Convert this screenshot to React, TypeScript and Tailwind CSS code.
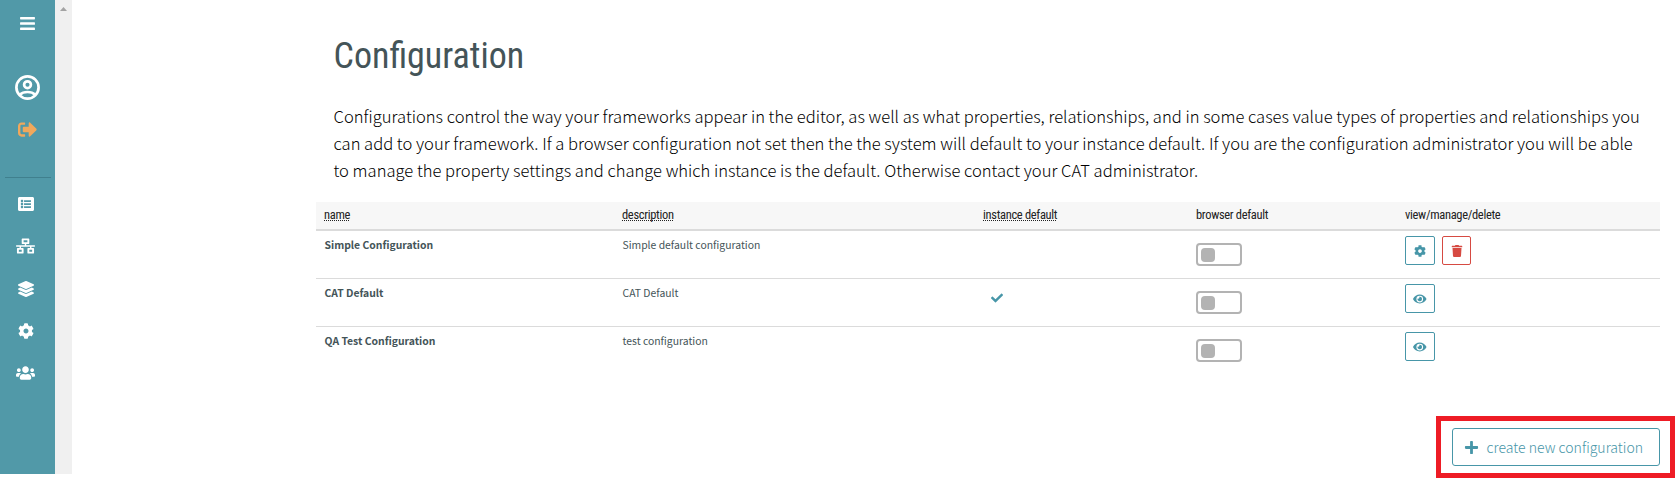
import React from "react";
import {
  FaBars,
  FaSignOutAlt,
  FaListAlt,
  FaNetworkWired,
  FaLayerGroup,
  FaCog,
  FaUsers,
  FaCheck,
  FaEye,
  FaTrash,
  FaPlus,
} from "react-icons/fa";

type Config = { name: string; description: string; isDefault?: boolean; editable?: boolean };

const configs: Config[] = [
  { name: "Simple Configuration", description: "Simple default configuration", editable: true },
  { name: "CAT Default", description: "CAT Default", isDefault: true },
  { name: "QA Test Configuration", description: "test configuration" },
];

const columns = [
  { label: "name", sortable: true },
  { label: "description", sortable: true },
  { label: "instance default", sortable: true },
  { label: "browser default" },
  { label: "view/manage/delete" },
];

function AccountIcon({ className }: { className?: string }) {
  return (
    <svg className={className} viewBox="0 0 25 25" fill="none" stroke="currentColor" strokeWidth="2.7">
      <circle cx="12.5" cy="12.5" r="11.1" />
      <circle cx="12.5" cy="9.7" r="3.4" />
      <path d="M4.8 19.8c2-2 4.800-2.800 7.700-2.800s5.700.8 7.700 2.800" />
    </svg>
  );
}

function Sidebar() {
  return (
    <nav className="flex h-[474px] w-[55px] shrink-0 flex-col bg-[#5199a8] text-white">
      <div className="mr-[4px] ml-[5px] flex h-[178px] flex-col items-center border-b border-[#40808e] pr-[1px]">
        <FaBars className="mt-[15px] size-[17px]" />
        <AccountIcon className="mt-[43px] size-[25px]" />
        <FaSignOutAlt className="mt-[19.5px] size-[19px] text-[#f0a85c]" />
      </div>
      <div className="mr-[4px] flex flex-col items-center">
        <div className="mt-[5px] flex h-[42.3px] items-center"><FaListAlt className="size-4" /></div>
        <div className="flex h-[42.3px] items-center"><FaNetworkWired className="h-[16px] w-[19px]" /></div>
        <div className="flex h-[42.3px] items-center"><FaLayerGroup className="size-4" /></div>
        <div className="flex h-[42.3px] items-center"><FaCog className="size-4" /></div>
        <div className="flex h-[42.3px] items-center"><FaUsers className="h-[16px] w-[19px]" /></div>
      </div>
    </nav>
  );
}

function Toggle() {
  return (
    <button className="mt-3 flex h-[23px] w-[46px] items-center rounded-[4px] border-2 border-[#b3b3b3] pl-[3px]">
      <span className="size-[14px] rounded-[4px] bg-[#b3b3b3]" />
    </button>
  );
}

export default function App() {
  return (
    <div className="flex h-[484px] bg-white font-['Noto_Sans_CJK_SC',sans-serif]">
      <Sidebar />
      <div className="flex h-[474px] w-[17px] shrink-0 justify-center bg-[#f0f0f0] pt-[7px]">
        <svg className="h-1 w-[7px]" viewBox="0 0 7 4" fill="#a3a3a3">
          <path d="M3.5 0 7 4H0z" />
        </svg>
      </div>
      <main className="ml-[244px] flex w-[1361px] shrink-0 flex-col">
        <h1 className="mt-[35px] ml-[17.5px] h-[42px] font-['Roboto_Condensed',Roboto,sans-serif] text-[36px] leading-[42px] text-[#445458] [font-stretch:75%]">
          Configuration
        </h1>
        <p className="mt-[26px] ml-[17.5px] w-[1314px] text-[16.57px] leading-[27px] font-light text-black">
          Configurations control the way your frameworks appear in the editor, as well as what properties, relationships, and in some cases value types of properties and relationships you
          can add to your framework. If a browser configuration not set then the the system will default to your instance default. If you are the configuration administrator you will be able
          to manage the property settings and change which instance is the default. Otherwise contact your CAT administrator.
        </p>
        <div className="mt-[18px] w-[1344px]">
          <div className="grid h-[29px] grid-cols-[298px_361px_213px_209px_263px] border-b-2 border-[#dbdbdb] bg-[#f7f7f7] font-['Roboto_Condensed',Roboto,sans-serif] text-[12.5px] leading-[26px] tracking-[-0.33px] text-[#222] [font-stretch:75%]">
            {columns.map((c) => (
              <div key={c.label} className="pl-2">
                <span className={c.sortable ? "underline decoration-dotted decoration-1 underline-offset-[1px] [text-decoration-skip-ink:none]" : ""}>
                  {c.label}
                </span>
              </div>
            ))}
          </div>
          {configs.map((c) => (
            <div
              key={c.name}
              className="grid h-12 grid-cols-[298px_361px_213px_209px_263px] border-b border-[#dbdbdb] text-[10.4px] leading-[15px] text-[#445458] last:border-b-0"
            >
              <div className="pt-[6px] pl-[8.5px] font-bold">{c.name}</div>
              <div className="pt-[6px] pl-[8.5px]">{c.description}</div>
              <div className="pt-[13px] pl-4 text-[#4796a8]">{c.isDefault && <FaCheck className="size-3" />}</div>
              <div className="pl-2">
                <Toggle />
              </div>
              <div className="flex gap-[7px] pt-[5px] pl-2">
                <button className="flex h-[29px] w-[30px] items-center justify-center rounded-[2px] border border-[#4796a8] text-[#4796a8]">
                  {c.editable ? <FaCog className="size-3" /> : <FaEye className="h-3 w-[13.5px]" />}
                </button>
                {c.editable && (
                  <button className="flex size-[29px] items-center justify-center rounded-[2px] border border-[#d64a42] text-[#d64a42]">
                    <FaTrash className="size-3" />
                  </button>
                )}
              </div>
            </div>
          ))}
        </div>
        <div className="mt-[41px] mr-[2px] flex h-[62px] w-[239px] items-center self-end border-[5px] border-[#ee1c25] pl-[11px]">
          <button className="flex h-[38px] w-[208px] items-center rounded-[3px] border border-[#4796a8] pl-[10.5px] text-[#4796a8]">
            <FaPlus className="size-[15px]" />
            <span className="ml-[8px] text-[14.05px] leading-[20px] font-light whitespace-nowrap">create new configuration</span>
          </button>
        </div>
      </main>
    </div>
  );
}
